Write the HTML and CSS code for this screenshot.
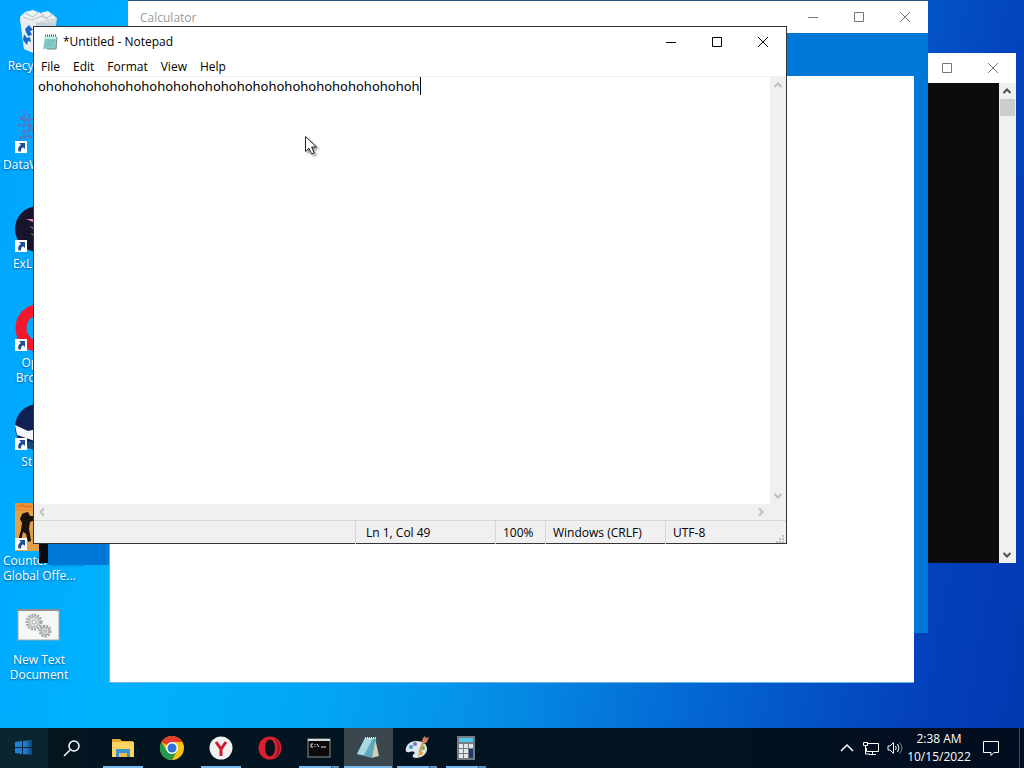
FILE: index.html
```
<!DOCTYPE html>
<html lang="en">
<head>
    <meta charset="UTF-8">
    <meta name="viewport" content="width=device-width, initial-scale=1.0">
    <title>Desktop</title>
    <link rel="stylesheet" href="styles.css">
</head>
<body>
    <svg class="defs" width="0" height="0" aria-hidden="true">
        <symbol id="shortcut" viewBox="0 0 12 12">
            <rect width="12" height="12" fill="#fff"/>
            <path d="M4 2h6v6L8 6.200C6.500 7 5.800 8.500 6 10.500H3.500C2.500 7.500 3.800 5 6 4z" fill="#1f4f94"/>
        </symbol>
        <symbol id="min" viewBox="0 0 12 12"><path d="M1 6.500h10" stroke="currentColor" fill="none"/></symbol>
        <symbol id="max" viewBox="0 0 12 12"><path d="M1.500 1.500h9v9h-9z" stroke="currentColor" fill="none"/></symbol>
        <symbol id="close" viewBox="0 0 12 12"><path d="M1 1l10 10M11 1L1 11" stroke="currentColor" fill="none"/></symbol>
        <symbol id="up" viewBox="0 0 10 10"><path d="M1.500 7L5 3.500 8.500 7" stroke="currentColor" stroke-width="2" fill="none"/></symbol>
        <symbol id="down" viewBox="0 0 10 10"><path d="M1.500 3L5 6.500 8.500 3" stroke="currentColor" stroke-width="2" fill="none"/></symbol>
        <symbol id="left" viewBox="0 0 10 10"><path d="M7 1.500L3.500 5 7 8.500" stroke="currentColor" stroke-width="2" fill="none"/></symbol>
        <symbol id="right" viewBox="0 0 10 10"><path d="M3 1.500L6.500 5 3 8.500" stroke="currentColor" stroke-width="2" fill="none"/></symbol>
    </svg>

    <main class="desktop">
        <div class="icons">
            <a class="icon" href="#">
                <svg viewBox="0 0 48 48">
                    <path d="M5 9l5-5 8-2 7 3 8-2 9 7-2 5H8z" fill="#eef1f4"/>
                    <path d="M10 5l8 4 6-5 7 6 8-4M8 9l9 3 10-4 8 5 7-3" stroke="#b9bfc6" stroke-width="1" fill="none"/>
                    <path d="M5 10l16 4 21-4-4 32-17 4-12-5z" fill="#d5dade" opacity=".9"/>
                    <path d="M5 10l16 4v32L9 41z" fill="#e9edf0"/>
                    <path d="M10 21l4-4 4 5-3 1 2 4-4 1-2-4zM9 26l-1 6 4 5 1-4 3 1-1-5-3 1z" fill="#1668c7"/>
                </svg>
                <span>Recycle Bin</span>
            </a>
            <a class="icon" href="#">
                <svg viewBox="0 0 48 48">
                    <path d="M9 3v34M14 7v25M19 2v38M24 6v30M5 12h24M3 18h26M7 24h22M4 30h25M6 9l20 22M26 8L5 33" stroke="#8a5a9c" stroke-width="2" stroke-dasharray="3 2" fill="none" opacity=".65"/>
                    <use href="#shortcut" y="34" width="12" height="12"/>
                </svg>
                <span>DataWorkshop</span>
            </a>
            <a class="icon" href="#">
                <svg viewBox="0 0 48 48">
                    <circle cx="23" cy="23" r="23" fill="#17152b"/>
                    <path d="M11 13h20v9z" fill="#e879b4"/>
                    <path d="M14 20l12 5v4z" fill="#c48ab0"/>
                    <path d="M15 27l12 5v4z" fill="#d8b4cb"/>
                    <use href="#shortcut" y="34" width="12" height="12"/>
                </svg>
                <span>ExLoader</span>
            </a>
            <a class="icon" href="#">
                <svg viewBox="0 0 48 48">
                    <ellipse cx="23" cy="23" rx="17" ry="18" fill="none" stroke="#f5162b" stroke-width="11"/>
                    <use href="#shortcut" y="34" width="12" height="12"/>
                </svg>
                <span>Opera<br>Browser</span>
            </a>
            <a class="icon" href="#">
                <svg viewBox="0 0 48 48">
                    <circle cx="23" cy="23" r="23" fill="#102055"/>
                    <path d="M0 21l13 6 9-2v13l-8-3-12-4z" fill="#f3f6fb"/>
                    <path d="M7 35l12 4v7l-9-4z" fill="#164878"/>
                    <use href="#shortcut" y="34" width="12" height="12"/>
                </svg>
                <span>Steam</span>
            </a>
            <a class="icon" href="#">
                <svg viewBox="0 0 48 48">
                    <rect width="48" height="48" fill="#e4a048"/>
                    <path d="M0 0h48v8H0z" fill="#ec9235"/>
                    <path d="M2 4l4-2 5 2 6-1" stroke="#c86f25" fill="none"/>
                    <path d="M9 10l4-1 2 4 5 0v4l-5 2-1 7 1 5 1 7-3 1-2-8-3-2-2 9H3l3-11 1-7-2-4 2-5z" fill="#18120b"/>
                    <use href="#shortcut" y="35" width="12" height="12"/>
                </svg>
                <span>Counter-Strike<br>Global Offe...</span>
            </a>
            <a class="icon" href="#">
                <svg viewBox="0 0 48 48">
                    <rect x="3" y="8" width="41" height="30" fill="#f6f8f8" stroke="#9da5a8"/>
                    <path d="M3 8h41" stroke="#8b8f92" stroke-width="2"/>
                    <g fill="none" stroke="#a5a8aa">
                        <circle cx="19" cy="20" r="7" stroke-width="3" stroke-dasharray="2 1"/>
                        <circle cx="19" cy="20" r="5" fill="#dfe1e2"/>
                        <circle cx="19" cy="20" r="2" fill="#fff"/>
                        <circle cx="30" cy="29" r="5" stroke-width="3" stroke-dasharray="2 1"/>
                        <circle cx="30" cy="29" r="4" fill="#d3d5d6"/>
                        <circle cx="30" cy="29" r="1" fill="#fff"/>
                    </g>
                </svg>
                <span>New Text<br>Document</span>
            </a>
        </div>

        <section class="window console" aria-label="Console">
            <div class="titlebar">
                <div class="controls">
                    <button aria-label="Minimize"><svg><use href="#min"/></svg></button>
                    <button aria-label="Maximize"><svg><use href="#max"/></svg></button>
                    <button aria-label="Close"><svg><use href="#close"/></svg></button>
                </div>
            </div>
            <div class="console-body">
                <div class="screen"></div>
                <div class="vscroll dark">
                    <button aria-label="Scroll up"><svg><use href="#up"/></svg></button>
                    <div class="thumb"></div>
                    <button aria-label="Scroll down"><svg><use href="#down"/></svg></button>
                </div>
            </div>
        </section>

        <section class="window blue-back"></section>

        <section class="window calculator" aria-label="Calculator">
            <div class="titlebar">
                <span class="title">Calculator</span>
                <div class="controls">
                    <button aria-label="Minimize"><svg><use href="#min"/></svg></button>
                    <button aria-label="Maximize"><svg><use href="#max"/></svg></button>
                    <button aria-label="Close"><svg><use href="#close"/></svg></button>
                </div>
            </div>
        </section>

        <section class="window blank"></section>

        <section class="window notepad" aria-label="Notepad">
            <div class="titlebar">
                <svg class="app-icon" viewBox="0 0 16 16">
                    <path d="M3 2h12l-1 13H1z" fill="#8ccfca"/>
                    <path d="M3 2h12v3H3z" fill="#c6ebe7"/>
                    <path d="M4 6h9M4 8h9M3 10h9M3 12h9" stroke="#5fb0ac" stroke-width="1" opacity=".6"/>
                    <path d="M15 3l-1 12H5" stroke="#6f8585" fill="none"/>
                    <path d="M3 1.500h12" stroke="#4c5656" stroke-width="2" stroke-dasharray="1 1"/>
                </svg>
                <span class="title">*Untitled - Notepad</span>
                <div class="controls">
                    <button aria-label="Minimize"><svg><use href="#min"/></svg></button>
                    <button aria-label="Maximize"><svg><use href="#max"/></svg></button>
                    <button aria-label="Close"><svg><use href="#close"/></svg></button>
                </div>
            </div>
            <nav class="menu">
                <button>File</button>
                <button>Edit</button>
                <button>Format</button>
                <button>View</button>
                <button>Help</button>
            </nav>
            <div class="editor">
                <div class="text" role="textbox" aria-label="Text editor" contenteditable="true" spellcheck="false">ohohohohohohohohohohohohohohohohohohohohohohohoh<i class="caret"></i></div>
                <div class="vscroll">
                    <button aria-label="Scroll up"><svg><use href="#up"/></svg></button>
                    <button aria-label="Scroll down"><svg><use href="#down"/></svg></button>
                </div>
            </div>
            <div class="hscroll">
                <button aria-label="Scroll left"><svg><use href="#left"/></svg></button>
                <button aria-label="Scroll right"><svg><use href="#right"/></svg></button>
            </div>
            <div class="status">
                <span></span>
                <span>Ln 1, Col 49</span>
                <span>100%</span>
                <span>Windows (CRLF)</span>
                <span>UTF-8</span>
                <svg class="grip" viewBox="0 0 10 10"><path d="M7 1h2v2H7zM4 4h2v2H4zM7 4h2v2H7zM1 7h2v2H1zM4 7h2v2H4zM7 7h2v2H7z" fill="#bfbfbf"/></svg>
            </div>
        </section>

        <svg class="pointer" viewBox="0 0 14 21">
            <path d="M1.500 1.500v15l3.500-3.300 2.500 5.800 2.600-1.200L7.700 12h4.800z" fill="#fff" stroke="#222"/>
        </svg>
    </main>

    <footer class="taskbar">
        <button class="start" aria-label="Start">
            <svg viewBox="0 0 20 20">
                <linearGradient id="win"><stop stop-color="#1a86dc"/><stop offset=".6" stop-color="#1b7fd2"/><stop offset="1" stop-color="#0d4577"/></linearGradient>
                <path d="M1 4l7-1v6H1zM9 3l9-1v7H9zM1 10h7v6l-7-1zM9 10h9v7l-9-1z" fill="url(#win)"/>
            </svg>
        </button>
        <button class="search" aria-label="Search">
            <svg viewBox="0 0 18 18"><circle cx="11" cy="7" r="5" fill="none" stroke="#fff" stroke-width="1.500"/><path d="M7 11l-6 6" stroke="#fff" stroke-width="1.500"/></svg>
        </button>
        <button class="task open" aria-label="File Explorer">
            <svg viewBox="0 0 24 24">
                <path d="M1 3h8l2 2h11v4H1z" fill="#e5a92c"/>
                <path d="M1 6h22v15H1z" fill="#fbd462"/>
                <path d="M5 13h14v8h-3v-4H8v4H5z" fill="#3f93cc"/>
                <path d="M8 17h8v4H8z" fill="#e8bd50"/>
            </svg>
        </button>
        <button class="task" aria-label="Chrome">
            <svg viewBox="0 0 24 24">
                <circle cx="12" cy="12" r="12" fill="#fbc116"/>
                <path d="M12 12L1.600 6A12 12 0 0 1 22.400 6H12z" fill="#e33b2e"/>
                <path d="M1.600 6A12 12 0 0 0 12 24l5.200-9L12 12 6.800 15z" fill="#229a4b"/>
                <circle cx="12" cy="12" r="6" fill="#fff"/>
                <circle cx="12" cy="12" r="4.500" fill="#2c72dc"/>
            </svg>
        </button>
        <button class="task open" aria-label="Yandex Browser">
            <svg viewBox="0 0 24 24">
                <circle cx="12" cy="12" r="11.500" fill="#f1f1f1"/>
                <path d="M7 6l5 7 5-7M12 12v8" fill="none" stroke="#d3172e" stroke-width="3"/>
            </svg>
        </button>
        <button class="task" aria-label="Opera">
            <svg viewBox="0 0 24 24">
                <circle cx="12" cy="12" r="11.500" fill="#d91f30"/>
                <path d="M16 2a11.500 11.500 0 0 1 0 20c5-6 5-14 0-20z" fill="#8d1824"/>
                <ellipse cx="12" cy="12" rx="5" ry="8.500" fill="#04121c"/>
            </svg>
        </button>
        <button class="task open more" aria-label="Command Prompt">
            <svg viewBox="0 0 24 24">
                <rect x="1" y="3" width="22" height="18" fill="#0a0a0a" stroke="#8c9296"/>
                <path d="M1 4h22" stroke="#d5dadd" stroke-width="2"/>
                <path d="M6 8H4v3h2M8 8v1M8 10v1M10 8l2 3M14 11h5" fill="none" stroke="#e6e6e6"/>
            </svg>
        </button>
        <button class="task open active" aria-label="Notepad">
            <svg viewBox="0 0 24 24">
                <path d="M19 2l4 18-8 2z" fill="#cfd2b4"/>
                <path d="M9 2h11l-4 20-15-4z" fill="#5fa9bd"/>
                <path d="M9 2h8L8 19l-7-1z" fill="#a9d8e0"/>
                <path d="M9 2h11" stroke="#e3ecec" stroke-dasharray="1 1" stroke-width="2"/>
            </svg>
        </button>
        <button class="task open more" aria-label="Paint">
            <svg viewBox="0 0 24 24">
                <path d="M11 5c7 0 11 3 11 8s-5 9-11 9c-4 0-4-3-2-4 2-2-1-3-4-2-4 1-5-1-4-4 1-4 5-7 10-7z" fill="#dce7ee"/>
                <circle cx="6" cy="11" r="2" fill="#4a97d2"/>
                <circle cx="10" cy="8" r="2" fill="#8a6bb5"/>
                <circle cx="18" cy="12" r="2" fill="#69aa4a"/>
                <circle cx="16" cy="17" r="2" fill="#e0a72f"/>
                <path d="M20 5l-7 18 1-9 4-10z" fill="#dd9b57"/>
                <path d="M18 2l2-2 1 2 3-1-2 5-3 2-2-3z" fill="#d0795a"/>
            </svg>
        </button>
        <button class="task open more" aria-label="Calculator">
            <svg viewBox="0 0 24 24">
                <path d="M3 0h18v24H3z" fill="#747d84"/>
                <path d="M5 2h14v4H5z" fill="#55c5ee"/>
                <path d="M5 8h4v4H5zM10 8h4v4h-4zM15 8h4v4h-4zM5 13h4v4H5zM10 13h4v4h-4zM5 18h4v4H5zM10 18h4v4h-4z" fill="#e4e7e9"/>
                <path d="M15 13h4v9h-4z" fill="#24396f"/>
            </svg>
        </button>
        <div class="tray">
            <button aria-label="Show hidden icons"><svg viewBox="0 0 16 16"><path d="M2 11l6-6 6 6" fill="none" stroke="#fff" stroke-width="1.500"/></svg></button>
            <button aria-label="Network"><svg viewBox="0 0 16 16"><path d="M5 3.500h10.500v8H3.500V8M9.500 12v2.500M6 14.500h7M.500 2.500h4v3h-4zM2.500 6v8H6" fill="none" stroke="#fff"/></svg></button>
            <button aria-label="Volume"><svg viewBox="0 0 16 16"><path d="M1 6h2l3.500-3.500v11L3 10H1z" fill="none" stroke="#fff"/><path d="M8.500 6q1.500 2 0 4M10.500 4q3 4 0 8" fill="none" stroke="#fff"/><path d="M12.500 2.500q5 5.500 0 11" fill="none" stroke="#7c878f"/></svg></button>
            <time class="clock" datetime="2022-10-15T02:38">2:38 AM<br>10/15/2022</time>
            <button class="notify" aria-label="Notifications"><svg viewBox="0 0 18 18"><path d="M1.500 2.500h15v11H12l-3 3v-3H1.500z" fill="none" stroke="#fff"/></svg></button>
        </div>
    </footer>
</body>
</html>
```
FILE: styles.css
```
* {
    box-sizing: border-box;
}

body {
    margin: 0;
    height: 100vh;
    display: flex;
    flex-direction: column;
    overflow: hidden;
    font-family: "Open Sans", "Noto Sans", sans-serif;
    font-size: 12px;
    line-height: 15px;
    color: #000;
    background: linear-gradient(100deg, #00a4ff 0%, #00b2fc 20%, #02a6f4 38%, #0590e6 52%, #0464d2 72%, #0340bb 90%, #0238b0 100%);
}

button {
    border: 0;
    padding: 0;
    background: none;
    font: inherit;
    color: inherit;
}

svg {
    display: block;
    flex: none;
}

.defs {
    position: absolute;
}

.desktop {
    flex: 1;
    position: relative;
}

/* desktop icons */
.icons {
    display: grid;
    grid-template-columns: 78px;
    grid-auto-rows: 99px;
    padding-top: 8px;
}

.icon {
    display: flex;
    flex-direction: column;
    align-items: center;
    gap: 2px;
    color: #fff;
    text-align: center;
    text-decoration: none;
    text-shadow: 0 1px 2px rgba(0, 40, 80, .6);
}

.icon svg {
    width: 48px;
    height: 48px;
}

.icon span {
    width: 72px;
    white-space: nowrap;
}

/* windows */
.window {
    position: absolute;
    display: flex;
    flex-direction: column;
    background: #fff;
}

.titlebar {
    display: flex;
    align-items: center;
    height: 29px;
    background: #fff;
}

.controls {
    display: flex;
    margin-left: auto;
}

.controls button {
    width: 46px;
    height: 29px;
    display: grid;
    place-items: center;
}

.controls svg {
    width: 12px;
    height: 12px;
}

.console {
    left: 39px;
    top: 53px;
    width: 977px;
    height: 510px;
    color: #777;
}

.console-body {
    flex: 1;
    display: flex;
    border-top: 1px solid #fff;
}

.screen {
    flex: 1;
    background: #0c0c0c;
}

.blue-back {
    left: 48px;
    top: 60px;
    width: 800px;
    height: 505px;
    background: #0078d7;
}

.calculator {
    left: 128px;
    top: 0;
    width: 800px;
    height: 633px;
    border-top: 1px solid #2c5378;
    background: #0078d7;
    color: #999;
}

.calculator .titlebar {
    height: 32px;
    padding-left: 12px;
}

.calculator .controls {
    color: #777;
}

.blank {
    left: 109px;
    top: 76px;
    width: 805px;
    height: 607px;
    border: 1px solid #6cb4e8;
    border-width: 0 0 1px 1px;
}

.notepad {
    left: 33px;
    top: 26px;
    width: 754px;
    height: 518px;
    border: 1px solid #333;
}

.notepad .titlebar {
    padding-left: 8px;
}

.app-icon {
    width: 16px;
    height: 16px;
    margin-right: 5px;
}

.menu {
    display: flex;
    gap: 1px;
    height: 20px;
    padding-left: 1px;
}

.menu button {
    padding: 0 6px;
}

.editor {
    flex: 1;
    display: flex;
    border-top: 1px solid #f0f0f0;
}

.text {
    flex: 1;
    padding: 0 4px;
    font-family: "Noto Sans", sans-serif;
    font-size: 13px;
    line-height: 18px;
    outline: none;
}

.caret {
    display: inline-block;
    width: 1px;
    height: 18px;
    background: #000;
    vertical-align: top;
}

.vscroll {
    width: 16px;
    display: flex;
    flex-direction: column;
    justify-content: space-between;
    background: #f0f0f0;
    color: #bfbfbf;
}

.vscroll button,
.hscroll button {
    width: 16px;
    height: 16px;
    display: grid;
    place-items: center;
}

.vscroll svg,
.hscroll svg {
    width: 10px;
    height: 10px;
}

.dark {
    width: 17px;
    color: #505050;
}

.thumb {
    height: 17px;
    margin: 0 1px auto;
    background: #cdcdcd;
}

.hscroll {
    display: flex;
    justify-content: space-between;
    height: 16px;
    padding-right: 17px;
    background: #f0f0f0;
    color: #bfbfbf;
}

.status {
    display: grid;
    grid-template-columns: 1fr 140px 50px 120px 110px 11px;
    height: 23px;
    border-top: 1px solid #d7d7d7;
    background: #f0f0f0;
    line-height: 23px;
}

.status span {
    border-left: 1px solid #d7d7d7;
    padding-left: 7px;
}

.status span:first-child {
    border-left: 0;
}

.status span:nth-child(2) {
    padding-left: 10px;
}

.grip {
    width: 10px;
    height: 10px;
    align-self: end;
}

.pointer {
    position: absolute;
    left: 304px;
    top: 135px;
    width: 14px;
    height: 21px;
    filter: drop-shadow(2px 2px 1px rgba(0, 0, 0, .4));
}

/* taskbar */
.taskbar {
    display: flex;
    height: 40px;
    background: linear-gradient(90deg, #03151f, #021421 60%, #020d20);
    color: #fff;
}

.taskbar button {
    display: grid;
    place-items: center;
}

.start {
    width: 48px;
    background: #0a2530;
}

.start svg {
    width: 20px;
    height: 20px;
}

.search {
    width: 48px;
    margin-right: 3px;
}

.search svg {
    width: 18px;
    height: 18px;
}

.task {
    width: 49px;
    padding: 0 4px;
    border-right: 1px solid transparent;
}

.task svg {
    width: 24px;
    height: 24px;
}

.taskbar .open {
    background: linear-gradient(#76b9ed, #76b9ed) center bottom / 40px 2px no-repeat;
}

.taskbar .more {
    background: linear-gradient(90deg, #76b9ed 32px, #33536b 32px, #33536b 33px, #5c93bf 33px) center bottom / 40px 2px no-repeat;
}

.taskbar .active {
    background: linear-gradient(#76b9ed, #76b9ed) center bottom / 48px 2px no-repeat #3a474f;
}

.tray {
    display: flex;
    align-items: center;
    margin-left: auto;
    padding-right: 8px;
    border-right: 1px solid #3c4a5a;
    margin-right: 4px;
}

.tray button {
    width: 24px;
    height: 40px;
}

.tray svg {
    width: 16px;
    height: 16px;
}

.clock {
    width: 64px;
    line-height: 18px;
    text-align: center;
}

.tray .notify {
    width: 40px;
}

.notify svg {
    width: 18px;
    height: 18px;
}
```
